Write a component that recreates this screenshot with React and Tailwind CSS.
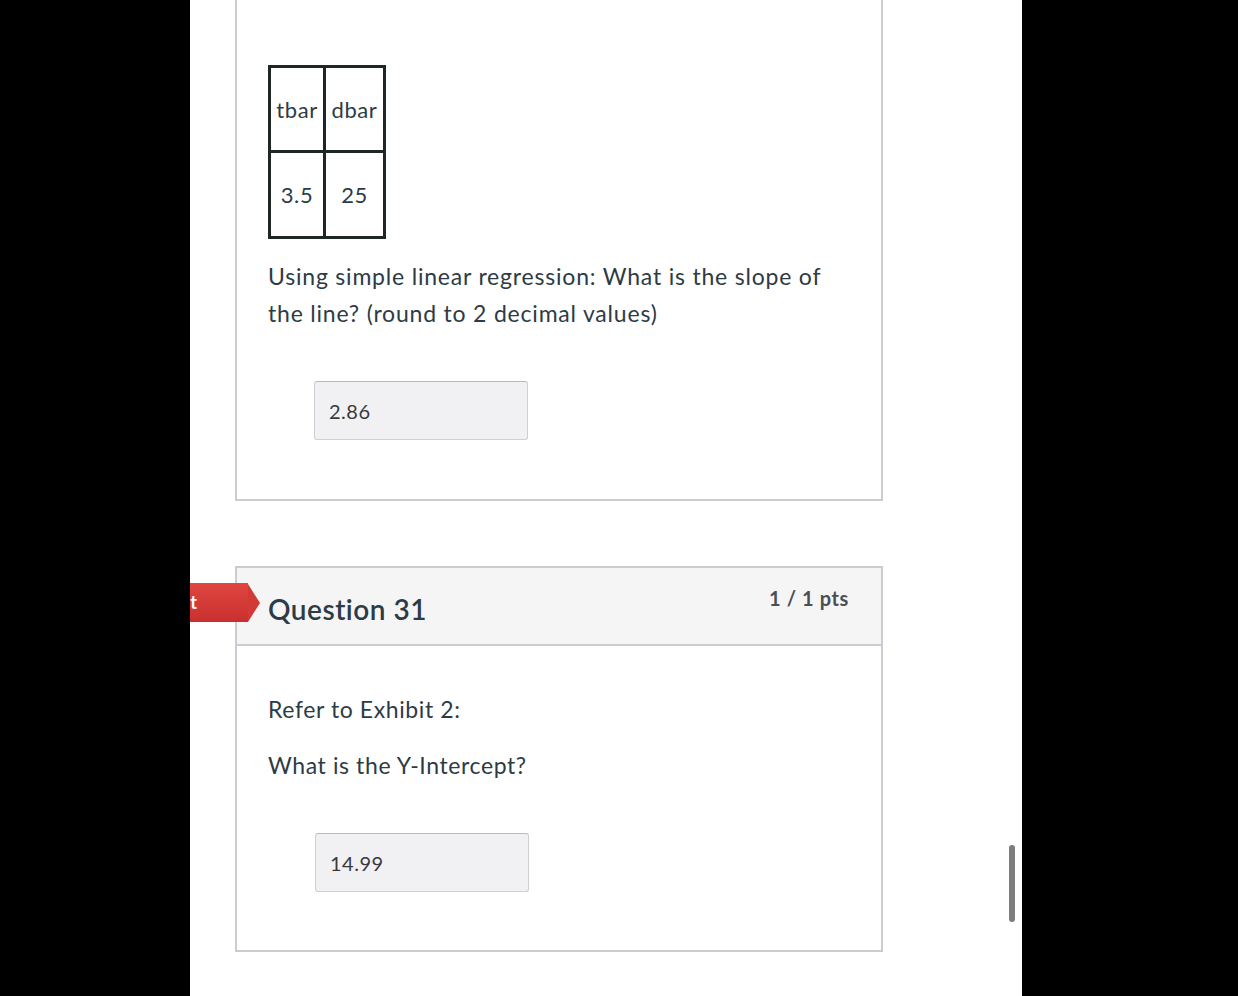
export default function App() {
  const font = { fontFamily: 'Lato, "Noto Sans", sans-serif' };
  return (
    <div className="flex h-[996px] w-[1238px] bg-black overflow-hidden" style={font}>
      <div className="w-[190px] shrink-0 bg-black" />
      <div className="relative w-[832px] shrink-0 bg-white overflow-hidden pl-[45px]">
        {/* Card 1 (continues from above) */}
        <div className="w-[648px] border-x-2 border-b-2 border-[#c9cdd1] bg-white pl-[31px] pt-[65px] pb-[59px] text-[#2d3b45]">
          <table className="border-collapse border-[3px] border-[#1e2626]">
            <tbody>
              <tr className="h-[85px]">
                <td className="w-[55px] border-[3px] border-[#1e2626] text-center text-[22px] tracking-[0.6px] px-0">tbar</td>
                <td className="w-[60px] border-[3px] border-[#1e2626] text-center text-[22px] tracking-[0.6px] px-0">dbar</td>
              </tr>
              <tr className="h-[86px]">
                <td className="border-[3px] border-[#1e2626] text-center text-[22px] tracking-[0.6px]">3.5</td>
                <td className="border-[3px] border-[#1e2626] text-center text-[22px] tracking-[0.6px]">25</td>
              </tr>
            </tbody>
          </table>
          <p className="mt-[19px] text-[23px] leading-[37px] tracking-[0.8px] w-[585px]">
            Using simple linear regression: What is the slope of the line? (round to 2 decimal values)
          </p>
          <div className="ml-[46px] mt-[49px] flex h-[59px] w-[214px] items-center rounded-[3px] border border-[#cfcfd3] border-t-[#b9b9bd] bg-[#f1f0f3] pl-[14px] text-[20px] tracking-[0.5px] text-[#3a3a3a]">
            2.86
          </div>
        </div>

        {/* Card 2 */}
        <div className="relative mt-[65px] w-[648px] border-2 border-[#c9cdd1] bg-white text-[#2d3b45]">
          <div className="relative flex h-[78px] items-start justify-between border-b-2 border-[#c9cdd1] bg-[#f5f5f6] pl-[31px] pr-[32px]">
            <div className="absolute left-[-150px] top-[15px] flex h-[39px] items-center">
              <div className="flex h-[39px] w-[161px] items-center justify-end bg-gradient-to-b from-[#e0463f] to-[#c92f2f] pr-[51px] text-[18px] font-bold text-white">
                Correct
              </div>
              <div className="h-0 w-0 border-y-[19.5px] border-l-[12px] border-y-transparent border-l-[#d23a36]" />
            </div>
            <h2 className="mt-[24px] text-[28px] font-semibold leading-[34px] tracking-[0.5px] text-[#2d3b45]">Question 31</h2>
            <div className="mt-[15px] text-[20px] font-bold tracking-[0.6px] text-[#4a4f54]">1 / 1 pts</div>
          </div>
          <div className="pl-[31px] pt-[45px] pb-[58px]">
            <p className="text-[23px] leading-[37px] tracking-[0.6px]">Refer to Exhibit 2:</p>
            <p className="mt-[19px] text-[23px] leading-[37px] tracking-[0.6px]">What is the Y-Intercept?</p>
            <div className="ml-[47px] mt-[49px] flex h-[59px] w-[214px] items-center rounded-[3px] border border-[#cfcfd3] border-t-[#b9b9bd] bg-[#f1f0f3] pl-[14px] text-[20px] tracking-[0.5px] text-[#3a3a3a]">
              14.99
            </div>
          </div>
        </div>

        {/* scrollbar thumb */}
        <div className="absolute left-[819px] top-[845px] h-[77px] w-[6px] rounded-full bg-[#7d7d7d]" />
      </div>
      <div className="flex-1 bg-black" />
    </div>
  );
}
